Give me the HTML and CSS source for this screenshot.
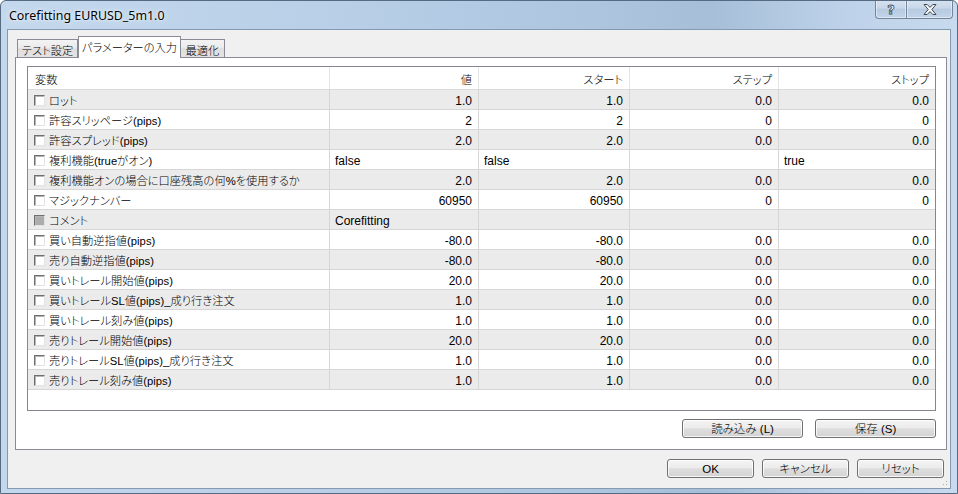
FILE: index.html
```html
<!DOCTYPE html>
<html lang="ja">
<head>
<meta charset="utf-8">
<title>Corefitting EURUSD_5m1.0</title>
<link rel="stylesheet" href="styles.css">
</head>
<body>
<div class="window">
  <div class="titlebar">
    <span class="title">Corefitting EURUSD_5m1.0</span>
    <div class="caption">
      <div class="cap-btn cap-help"><span class="q">?</span></div>
      <div class="cap-btn cap-close">
        <svg width="14" height="11" viewBox="0 0 14 11"><polygon points="1,0.5 4.2,0.5 7,3.4 9.8,0.5 13,0.5 8.8,5.5 13,10.5 9.8,10.5 7,7.6 4.2,10.5 1,10.5 5.2,5.5" fill="#f7f9fb" stroke="#3f4852" stroke-width="1" stroke-linejoin="round"/></svg>
      </div>
    </div>
  </div>
  <div class="client">
    <div class="tabs">
      <div class="tab t1">テスト設定</div>
      <div class="tab t2 active">パラメーターの入力</div>
      <div class="tab t3">最適化</div>
    </div>
    <div class="panel">
      <div class="list">
        <div class="row head">
          <div class="cell hname">変数</div>
          <div class="cell num">値</div>
          <div class="cell num">スタート</div>
          <div class="cell num">ステップ</div>
          <div class="cell num">ストップ</div>
        </div>
        <div class="row alt">
          <div class="cell name"><span class="cb"></span>ロット</div>
          <div class="cell num">1.0</div><div class="cell num">1.0</div><div class="cell num">0.0</div><div class="cell num">0.0</div>
        </div>
        <div class="row">
          <div class="cell name"><span class="cb"></span>許容スリッページ(pips)</div>
          <div class="cell num">2</div><div class="cell num">2</div><div class="cell num">0</div><div class="cell num">0</div>
        </div>
        <div class="row alt">
          <div class="cell name"><span class="cb"></span>許容スプレッド(pips)</div>
          <div class="cell num">2.0</div><div class="cell num">2.0</div><div class="cell num">0.0</div><div class="cell num">0.0</div>
        </div>
        <div class="row">
          <div class="cell name"><span class="cb"></span>複利機能(trueがオン)</div>
          <div class="cell txt">false</div><div class="cell txt">false</div><div class="cell txt"></div><div class="cell txt">true</div>
        </div>
        <div class="row alt">
          <div class="cell name"><span class="cb"></span>複利機能オンの場合に口座残高の何%を使用するか</div>
          <div class="cell num">2.0</div><div class="cell num">2.0</div><div class="cell num">0.0</div><div class="cell num">0.0</div>
        </div>
        <div class="row">
          <div class="cell name"><span class="cb"></span>マジックナンバー</div>
          <div class="cell num">60950</div><div class="cell num">60950</div><div class="cell num">0</div><div class="cell num">0</div>
        </div>
        <div class="row alt">
          <div class="cell name"><span class="cb dis"></span>コメント</div>
          <div class="cell txt">Corefitting</div><div class="cell txt"></div><div class="cell txt"></div><div class="cell txt"></div>
        </div>
        <div class="row">
          <div class="cell name"><span class="cb"></span>買い自動逆指値(pips)</div>
          <div class="cell num">-80.0</div><div class="cell num">-80.0</div><div class="cell num">0.0</div><div class="cell num">0.0</div>
        </div>
        <div class="row alt">
          <div class="cell name"><span class="cb"></span>売り自動逆指値(pips)</div>
          <div class="cell num">-80.0</div><div class="cell num">-80.0</div><div class="cell num">0.0</div><div class="cell num">0.0</div>
        </div>
        <div class="row">
          <div class="cell name"><span class="cb"></span>買いトレール開始値(pips)</div>
          <div class="cell num">20.0</div><div class="cell num">20.0</div><div class="cell num">0.0</div><div class="cell num">0.0</div>
        </div>
        <div class="row alt">
          <div class="cell name"><span class="cb"></span>買いトレールSL値(pips)_成り行き注文</div>
          <div class="cell num">1.0</div><div class="cell num">1.0</div><div class="cell num">0.0</div><div class="cell num">0.0</div>
        </div>
        <div class="row">
          <div class="cell name"><span class="cb"></span>買いトレール刻み値(pips)</div>
          <div class="cell num">1.0</div><div class="cell num">1.0</div><div class="cell num">0.0</div><div class="cell num">0.0</div>
        </div>
        <div class="row alt">
          <div class="cell name"><span class="cb"></span>売りトレール開始値(pips)</div>
          <div class="cell num">20.0</div><div class="cell num">20.0</div><div class="cell num">0.0</div><div class="cell num">0.0</div>
        </div>
        <div class="row">
          <div class="cell name"><span class="cb"></span>売りトレールSL値(pips)_成り行き注文</div>
          <div class="cell num">1.0</div><div class="cell num">1.0</div><div class="cell num">0.0</div><div class="cell num">0.0</div>
        </div>
        <div class="row alt">
          <div class="cell name"><span class="cb"></span>売りトレール刻み値(pips)</div>
          <div class="cell num">1.0</div><div class="cell num">1.0</div><div class="cell num">0.0</div><div class="cell num">0.0</div>
        </div>
      </div>
      <div class="panel-buttons">
        <button class="btn wide">読み込み (L)</button>
        <button class="btn wide">保存 (S)</button>
      </div>
    </div>
    <div class="dialog-buttons">
      <button class="btn">OK</button>
      <button class="btn">キャンセル</button>
      <button class="btn">リセット</button>
    </div>
    <div class="grip"></div>
  </div>
</div>
</body>
</html>
```

FILE: styles.css
```css
html, body {
  margin: 0;
  padding: 0;
  background: #ffffff;
}

body {
  font-family: "Liberation Sans", "Noto Sans CJK JP", sans-serif;
  font-size: 12px;
  font-weight: 300;
  color: #000;
  font-feature-settings: "palt";
}

.window {
  width: 958px;
  height: 494px;
  box-sizing: border-box;
  border: 1px solid #566a82;
  border-radius: 6px 6px 0 0;
  padding: 0 6px 4px 6px;
  background: linear-gradient(90deg, #c4d8ed 0%, #b8cfe7 35%, #adc5df 62%, #a6bed8 74%, #bdd2e9 88%, #c7daee 100%);
  display: flex;
  flex-direction: column;
  overflow: hidden;
}

.titlebar {
  height: 28px;
  margin: 0 -6px;
  padding-left: 8px;
  display: flex;
  align-items: center;
  flex: none;
}

.title {
  font-family: "Noto Sans", "Liberation Sans", sans-serif;
  font-size: 12.4px;
  font-weight: 400;
  color: #000;
  text-shadow: 0 0 6px rgba(255, 255, 255, 0.9), 0 0 2px rgba(255, 255, 255, 0.9);
  margin-top: 1px;
}

.caption {
  margin-left: auto;
  align-self: flex-start;
  margin-top: -1px;
  margin-right: 4px;
  display: flex;
}

.cap-btn {
  height: 19px;
  box-sizing: border-box;
  border: 1px solid #75869b;
  border-top: none;
  display: flex;
  align-items: center;
  justify-content: center;
  background: linear-gradient(#d6e2ef 0%, #c8d7e9 45%, #b6cae0 52%, #c3d5e9 100%);
  box-shadow: inset 0 0 0 1px rgba(255, 255, 255, 0.45);
}

.cap-help {
  width: 31px;
  border-right: none;
  border-radius: 0 0 0 4px;
}

.cap-close {
  width: 47px;
  border-radius: 0 0 4px 0;
}

.q {
  font-family: "DejaVu Sans", sans-serif;
  font-weight: bold;
  font-size: 13px;
  color: #f7f9fb;
  -webkit-text-stroke: 0.8px #3f4852;
  line-height: 1;
}

.client {
  flex: 1;
  border: 1px solid #8599b1;
  background: #f0f0f0;
  display: flex;
  flex-direction: column;
  position: relative;
}

.tabs {
  display: flex;
  align-items: flex-end;
  height: 21px;
  margin-top: 6px;
  padding-left: 9px;
  flex: none;
}

.tab {
  height: 18px;
  box-sizing: border-box;
  border: 1px solid #898c95;
  border-bottom: none;
  background: linear-gradient(#f3f3f3 0%, #ebebeb 45%, #dedede 52%, #e3e3e3 100%);
  display: flex;
  align-items: center;
  justify-content: center;
  padding-top: 2px;
  white-space: nowrap;
  font-size: 11.25px;
}

.t1 { width: 61px; }
.t2 { width: 103px; }
.t3 { width: 45px; margin-left: -1px; }

.tab.active {
  height: 22px;
  margin-bottom: -1px;
  background: #ffffff;
  position: relative;
  z-index: 1;
  align-items: flex-start;
  padding-top: 2px;
}

.panel {
  margin-left: 7px;
  width: 932px;
  height: 393px;
  box-sizing: border-box;
  border: 1px solid #898c95;
  background: #ffffff;
  padding: 8px 10px 11px 11px;
  display: flex;
  flex-direction: column;
  flex: none;
}

.list {
  height: 345px;
  box-sizing: border-box;
  border: 1px solid #828790;
  overflow: hidden;
  flex: none;
}

.row {
  display: grid;
  grid-template-columns: 302px 149px 151px 149px 1fr;
  height: 20px;
  box-sizing: border-box;
  border-bottom: 1px solid #d6d6d6;
}

.row.head {
  height: 23px;
  border-bottom-color: #dadada;
}

.row.alt {
  background: #ebebeb;
}

.cell {
  border-right: 1px solid #d6d6d6;
  display: flex;
  align-items: center;
  padding: 2px 6px 0 5px;
  white-space: nowrap;
  overflow: hidden;
  line-height: 14px;
}

.cell:last-child {
  border-right: none;
}

.head .cell {
  border-right-color: #e6e6e6;
  font-size: 11.25px;
  padding-top: 3px;
}

.hname {
  padding-left: 7px;
}

.num {
  justify-content: flex-end;
}

.name {
  padding-left: 6px;
  font-size: 11.25px;
}

.cb {
  width: 11px;
  height: 11px;
  box-sizing: border-box;
  border: 1px solid;
  border-color: #6f6f6f #e2e2e2 #e2e2e2 #6f6f6f;
  background: #ffffff;
  box-shadow: inset 1px 1px 0 #b4b4b4;
  margin-right: 4px;
  margin-top: -1px;
  flex: none;
}

.cb.dis {
  background: #acacac;
}

.panel-buttons {
  display: flex;
  justify-content: flex-end;
  gap: 12px;
  margin-top: 8px;
}

.dialog-buttons {
  display: flex;
  justify-content: flex-end;
  gap: 8px;
  margin-top: 9px;
  margin-right: 6px;
}

.btn {
  width: 87px;
  height: 19px;
  box-sizing: border-box;
  border: 1px solid #707070;
  border-radius: 3px;
  background: linear-gradient(#f4f4f4 0%, #ececec 45%, #dedede 52%, #d3d3d3 100%);
  box-shadow: inset 0 0 0 1px rgba(255, 255, 255, 0.8);
  font: inherit;
  font-size: 11.5px;
  color: #000;
  padding: 1px 0 0 0;
  line-height: 16px;
}

.btn.wide {
  width: 121px;
}

.grip {
  position: absolute;
  right: 1px;
  bottom: 1px;
  width: 10px;
  height: 10px;
  background-image: radial-gradient(circle, #a9a9a9 0.8px, transparent 1px);
  background-size: 3px 3px;
  clip-path: polygon(100% 0, 100% 100%, 0 100%);
}
```
